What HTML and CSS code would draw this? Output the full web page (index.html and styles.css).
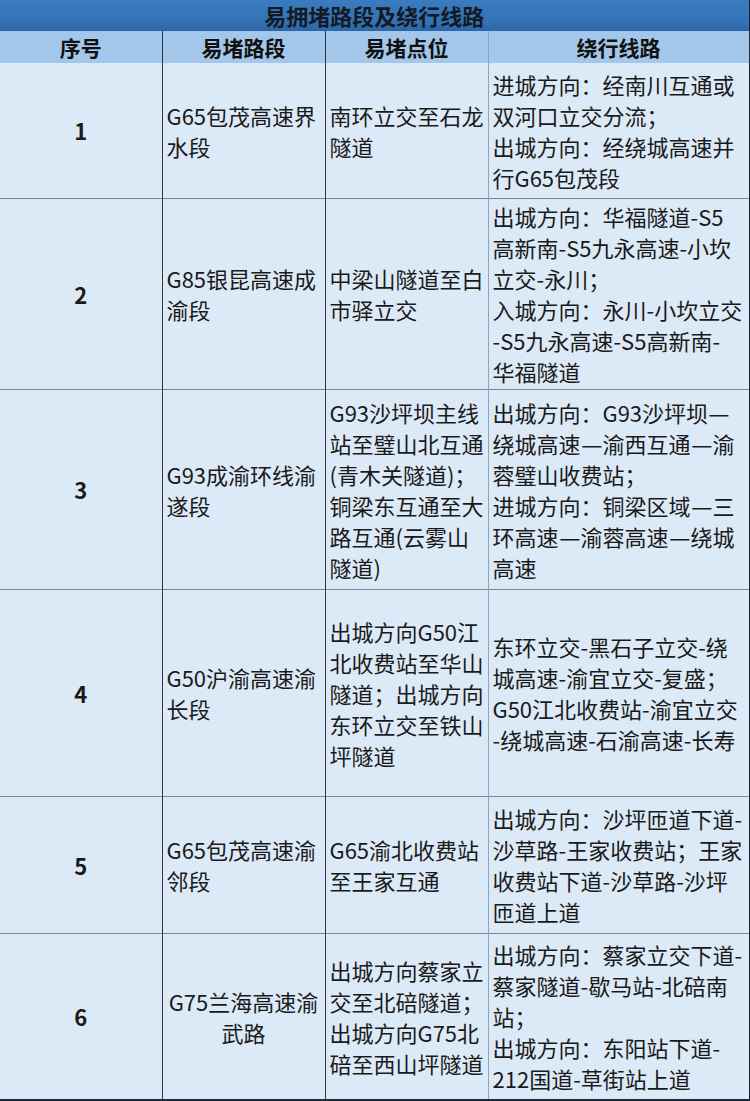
FILE: index.html
```html
<!DOCTYPE html>
<html lang="zh-CN">
<head>
<meta charset="utf-8">
<title>易拥堵路段及绕行线路</title>
<link rel="stylesheet" href="styles.css">
</head>
<body>
<table class="detour">
  <colgroup>
    <col class="c-no">
    <col class="c-road">
    <col class="c-spot">
    <col class="c-route">
  </colgroup>
  <thead>
    <tr class="title-row"><th colspan="4" class="title">易拥堵路段及绕行线路</th></tr>
    <tr class="head-row">
      <th class="h h-no">序号</th>
      <th class="h h-road">易堵路段</th>
      <th class="h h-spot">易堵点位</th>
      <th class="h h-route">绕行线路</th>
    </tr>
  </thead>
  <tbody>
    <tr class="r1">
      <td class="no">1</td>
      <td class="road">G65包茂高速界<br>水段</td>
      <td class="spot">南环立交至石龙<br>隧道</td>
      <td class="route">进城方向：经南川互通或<br>双河口立交分流；<br>出城方向：经绕城高速并<br>行G65包茂段</td>
    </tr>
    <tr class="r2">
      <td class="no">2</td>
      <td class="road">G85银昆高速成<br>渝段</td>
      <td class="spot">中梁山隧道至白<br>市驿立交</td>
      <td class="route">出城方向：华福隧道-S5<br>高新南-S5九永高速-小坎<br>立交-永川；<br>入城方向：永川-小坎立交<br>-S5九永高速-S5高新南-<br>华福隧道</td>
    </tr>
    <tr class="r3">
      <td class="no">3</td>
      <td class="road">G93成渝环线渝<br>遂段</td>
      <td class="spot">G93沙坪坝主线<br>站至璧山北互通<br>(青木关隧道)；<br>铜梁东互通至大<br>路互通(云雾山<br>隧道)</td>
      <td class="route">出城方向：G93沙坪坝<span class="dash">—</span><br>绕城高速<span class="dash">—</span>渝西互通<span class="dash">—</span>渝<br>蓉璧山收费站；<br>进城方向：铜梁区域<span class="dash">—</span>三<br>环高速<span class="dash">—</span>渝蓉高速<span class="dash">—</span>绕城<br>高速</td>
    </tr>
    <tr class="r4">
      <td class="no">4</td>
      <td class="road">G50沪渝高速渝<br>长段</td>
      <td class="spot">出城方向G50江<br>北收费站至华山<br>隧道；出城方向<br>东环立交至铁山<br>坪隧道</td>
      <td class="route">东环立交-黑石子立交-绕<br>城高速-渝宜立交-复盛；<br>G50江北收费站-渝宜立交<br>-绕城高速-石渝高速-长寿</td>
    </tr>
    <tr class="r5">
      <td class="no">5</td>
      <td class="road">G65包茂高速渝<br>邻段</td>
      <td class="spot">G65渝北收费站<br>至王家互通</td>
      <td class="route">出城方向：沙坪匝道下道-<br>沙草路-王家收费站；王家<br>收费站下道-沙草路-沙坪<br>匝道上道</td>
    </tr>
    <tr class="r6">
      <td class="no">6</td>
      <td class="road road-center">G75兰海高速渝<br>武路</td>
      <td class="spot">出城方向蔡家立<br>交至北碚隧道；<br>出城方向G75北<br>碚至西山坪隧道</td>
      <td class="route">出城方向：蔡家立交下道-<br>蔡家隧道-歇马站-北碚南<br>站；<br>出城方向：东阳站下道-<br>212国道-草街站上道</td>
    </tr>
  </tbody>
</table>
</body>
</html>
```

FILE: styles.css
```css
html, body {
  margin: 0;
  padding: 0;
  background: #dce9f6;
}

body {
  font-family: "Noto Sans CJK SC", "Noto Sans", sans-serif;
  color: #1a1a1a;
}

.detour {
  width: 750px;
  border-collapse: collapse;
  table-layout: fixed;
  background: #dce9f6;
}

.c-no { width: 162px; }
.c-road { width: 163px; }
.c-spot { width: 163px; }
.c-route { width: 262px; }

.title {
  height: 31px;
  padding: 0;
  font-size: 22px;
  font-weight: 700;
  line-height: 31px;
  text-align: center;
  color: #141a24;
  background: linear-gradient(#3a7cc0, #3372b5 70%, #2b66a6);
  border-right: 3px solid #1d2a3a;
}

.h {
  height: 32px;
  padding: 0;
  font-size: 21px;
  font-weight: 700;
  line-height: 32px;
  text-align: center;
  color: #111;
  background: #a3c7ea;
}

.h-no, .h-road { border-right: 1px solid #2f3640; }
.h-spot { border-right: 1px solid #8fa4ba; }
.h-route { border-right: 3px solid #1d2a3a; }

td {
  padding: 0 4px;
  font-size: 22px;
  line-height: 31px;
  vertical-align: middle;
  white-space: nowrap;
  overflow: hidden;
  border-top: 1px solid #7d8896;
}

.no {
  text-align: center;
  font-weight: 700;
  padding: 0;
  border-right: 1px solid #2f3640;
}

.road {
  text-align: left;
  border-right: 1px solid #2f3640;
}

.road-center { text-align: center; }

.spot {
  padding: 0 3px 0 4px;
  border-right: 1px solid #8fa4ba;
}

.route {
  padding-right: 0;
  border-right: 3px solid #1d2a3a;
}

.dash {
  display: inline-block;
  width: 1em;
  text-align: center;
  transform: scaleX(1.08);
}

tbody tr:first-child td { border-top: none; }

.r1 td { height: 135px; }
.r2 td { height: 190px; }
.r3 td { height: 199px; }
.r4 td { height: 206px; }
.r5 td { height: 136px; }
.r6 td {
  height: 165px;
  border-bottom: 2px solid #1d2a3a;
}
```
